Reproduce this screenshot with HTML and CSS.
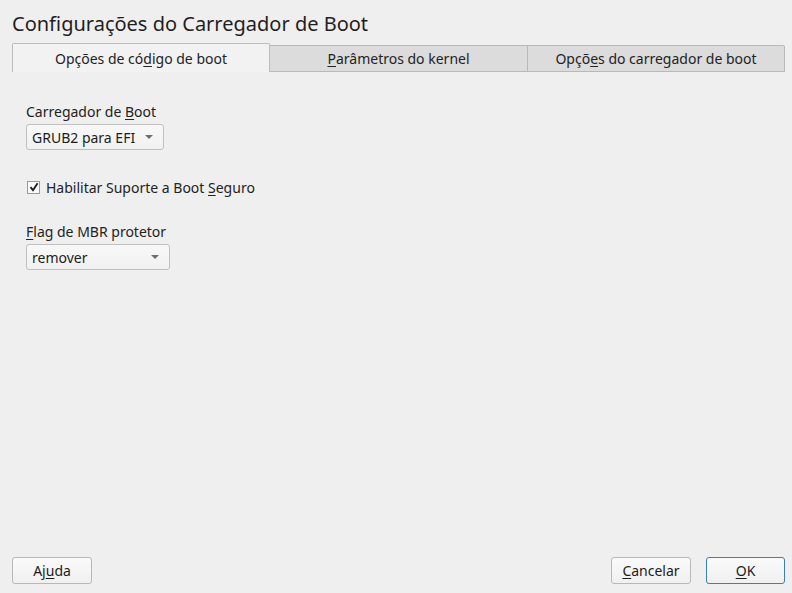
FILE: index.html
```html
<!DOCTYPE html>
<html>
<head>
<meta charset="utf-8">
<link rel="stylesheet" href="styles.css">
</head>
<body>
<div class="dialog">
  <h1 class="title">Configurações do Carregador de Boot</h1>
  <div class="tabs">
    <div class="tab active">Opções de có<u>d</u>igo de boot</div>
    <div class="tab"><u>P</u>arâmetros do kernel</div>
    <div class="tab last">Opçõ<u>e</u>s do carregador de boot</div>
    <div class="tab-rest"></div>
  </div>
  <div class="content">
    <div class="field">
      <div class="label">Carregador de <u>B</u>oot</div>
      <div class="combo combo-grub"><span>GRUB2 para EFI</span><span class="arrow"></span></div>
    </div>
    <label class="check">
      <span class="box"><svg width="10" height="10" viewBox="0 0 10 10"><path d="M1.5 5.2 L4 8.2 L8.6 1.2" fill="none" stroke="#1a1a1a" stroke-width="1.8"/></svg></span>
      <span>Habilitar Suporte a Boot <u>S</u>eguro</span>
    </label>
    <div class="field">
      <div class="label"><u>F</u>lag de MBR protetor</div>
      <div class="combo combo-mbr"><span>remover</span><span class="arrow"></span></div>
    </div>
  </div>
  <div class="buttons">
    <button class="btn">Aj<u>u</u>da</button>
    <div class="spacer"></div>
    <button class="btn"><u>C</u>ancelar</button>
    <button class="btn default"><u>O</u>K</button>
  </div>
</div>
</body>
</html>
```
FILE: styles.css
```css
html, body {
  margin: 0;
  padding: 0;
  background: #efefef;
}
body {
  font-family: "Noto Sans", "DejaVu Sans", sans-serif;
  font-size: 14px;
  color: #232323;
  width: 792px;
  height: 593px;
  overflow: hidden;
}
u { text-decoration-thickness: 1px; text-underline-offset: 2px; }
.dialog {
  display: flex;
  flex-direction: column;
  height: 593px;
  box-sizing: border-box;
  padding: 0 7px 9px 12px;
}
.title {
  font-size: 20px;
  font-weight: normal;
  margin: 0;
  padding-top: 10px;
  height: 43px;
  line-height: 28px;
  color: #1f1f1f;
  box-sizing: border-box;
}
.tabs {
  display: flex;
  align-items: flex-end;
  height: 29px;
}
.tab {
  width: 258px;
  height: 27px;
  box-sizing: border-box;
  background: #dcdcdc;
  border: 1px solid #b9b9b9;
  border-left: none;
  text-align: center;
  line-height: 26px;
  color: #232323;
}
.tab.active {
  width: 258px;
  height: 29px;
  background: #f2f2f2;
  border: 1px solid #bcbcbc;
  border-bottom: none;
  border-radius: 2px 2px 0 0;
  line-height: 30px;
}
.tab.last { width: 257px; border-radius: 0 2px 0 0; }
.tab-rest { flex: 1; }
.content {
  flex: 1;
  padding: 30px 0 0 14px;
}
.field { display: flex; flex-direction: column; align-items: flex-start; }
.label { height: 20px; line-height: 20px; margin-bottom: 2px; }
.combo {
  height: 26px;
  box-sizing: border-box;
  border: 1px solid #c0c0c0;
  border-radius: 3px;
  background: linear-gradient(#f8f8f8, #f1f1f1);
  display: flex;
  align-items: center;
  justify-content: space-between;
  padding: 0 10px 0 5px;
  color: #1c1c1c;
}
.combo-grub { width: 138px; }
.combo-mbr { width: 144px; }
.arrow {
  width: 0; height: 0;
  border-left: 4px solid transparent;
  border-right: 4px solid transparent;
  border-top: 4px solid #6e6e6e;
}
.check {
  display: flex;
  align-items: center;
  gap: 6px;
  margin: 27px 0 0 1px;
  height: 20px;
}
.box {
  width: 13px; height: 13px;
  box-sizing: border-box;
  border: 1px solid #9a9a9a;
  background: #fafafa;
  display: flex;
  align-items: center;
  justify-content: center;
}
.check + .field { margin-top: 25px; }
.buttons {
  display: flex;
  gap: 16px;
  align-items: center;
}
.spacer { flex: 1; }
.btn {
  font-family: inherit;
  font-size: 14px;
  color: #1c1c1c;
  height: 27px;
  width: 80px;
  box-sizing: border-box;
  border: 1px solid #b8b8b8;
  border-radius: 3px;
  background: linear-gradient(#fafafa, #f0f0f0);
  padding: 0;
}
.btn.default {
  width: 79px;
  border-color: #3c7eb5;
  margin-left: -1px;
}
```
